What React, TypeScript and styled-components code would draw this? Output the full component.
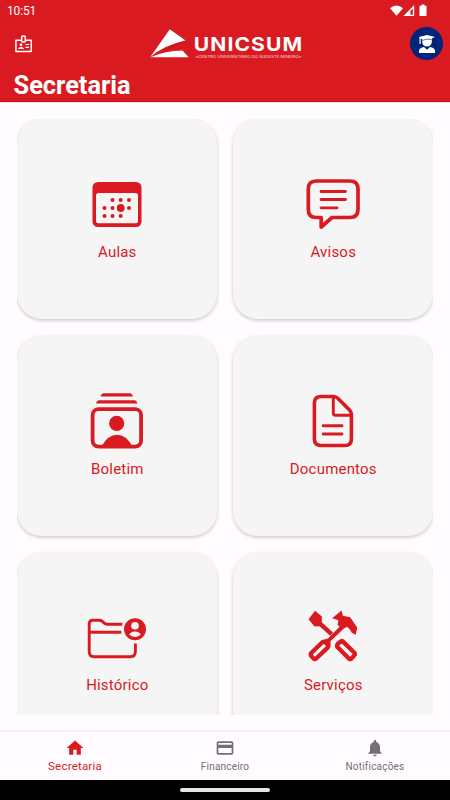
import React from "react";
import styled, { createGlobalStyle } from "styled-components";

const RED = "#d91a21";
const CARD = "#f5f5f5";

const Global = createGlobalStyle`
  * { box-sizing: border-box; }
  body { margin: 0; font-family: Roboto, "Liberation Sans", sans-serif; background: #fffbff; }
  svg { display: block; flex: none; }
`;

const Screen = styled.div`
  width: 450px;
  height: 800px;
  display: flex;
  flex-direction: column;
  overflow: hidden;
  background: #fffbff;
`;

const Header = styled.header`
  height: 102px;
  flex: none;
  background: ${RED};
  color: #fff;
  border-bottom: 1px solid #cf0d17;
  box-shadow: 0 1px 0 #f7e4e9;
`;

const StatusBar = styled.div`
  height: 22px;
  display: flex;
  justify-content: space-between;
  align-items: center;
  padding: 0 22px 0 7px;
  font-size: 12px;
  letter-spacing: -0.15px;
  line-height: 20px;
`;

const TopBar = styled.div`
  height: 44px;
  display: grid;
  grid-template-columns: 134px 154px 1fr;
  align-items: center;
  padding: 0 7px 0 15px;
`;

const Avatar = styled.div`
  justify-self: end;
  width: 33px;
  height: 33px;
  margin-top: -1px;
  border-radius: 50%;
  background: #03247b;
  display: grid;
  place-items: center;
`;

const Title = styled.h1`
  margin: 4px 0 0 13.5px;
  font-size: 25.4px;
  line-height: 30px;
  font-weight: 700;
`;

const Grid = styled.main`
  height: 596px;
  flex: none;
  margin: 17px 17px 0;
  padding-top: 0.4px;
  display: grid;
  grid-template-columns: 1fr 1fr;
  grid-auto-rows: 200px;
  gap: 16.6px 16px;
  overflow: hidden;
`;

const Card = styled.section`
  border-radius: 25px;
  background: ${CARD};
  box-shadow: 0 1px 4px rgba(0, 0, 0, 0.14), 0 2px 3px rgba(0, 0, 0, 0.08);
  color: ${RED};
  display: flex;
  flex-direction: column;
  align-items: center;
  padding-top: 52.6px;
`;

const CardLabel = styled.span`
  margin-top: 6px;
  padding-left: 0.6px;
  font-size: 15px;
  line-height: 20px;
  letter-spacing: 0.2px;
`;

const Nav = styled.nav`
  margin-top: 15px;
  height: 50px;
  flex: none;
  border-top: 2px solid #f8f2f6;
  display: grid;
  grid-template-columns: repeat(3, 1fr);
`;

const NavItem = styled.div<{ $active?: boolean }>`
  display: flex;
  flex-direction: column;
  align-items: center;
  padding-top: 5.5px;
  color: ${(p) => (p.$active ? RED : "#717073")};
  font-size: ${(p) => (p.$active ? 11.5 : 10)}px;
  letter-spacing: 0.2px;
  line-height: 14px;
`;

const NavLabel = styled.span<{ $active?: boolean }>`
  margin-top: ${(p) => (p.$active ? 1.5 : 2.5)}px;
`;

const SystemBar = styled.footer`
  height: 20px;
  flex: none;
  background: #000;
  display: grid;
  place-items: center;
`;

const HomeHandle = styled.div`
  width: 90px;
  height: 4px;
  border-radius: 2px;
  background: #e6e6e6;
`;

const StatusIcons = () => (
  <svg width="38" height="14" viewBox="0 0 38 14" fill="#fff">
    <path d="M0 4.200Q6.500-1 13 4.200L6.500 11.700Z" />
    <path fillRule="evenodd" d="M24.200 1V12H13.500ZM22.800 4.600L20.400 7V10.700H22.800Z" />
    <path d="M31.500 .500h3v1.200h2V11.500q0 .5-.5.5h-6q-.5 0-.5-.5V1.700h2Z" />
  </svg>
);

const BadgeIcon = () => (
  <svg width="18" height="19" viewBox="0 0 18 19" fill="none" stroke="#fff" strokeWidth="1.5">
    <path d="M6.200 5.200H.9V16.600H16.200V5.200H10.500" strokeLinejoin="round" />
    <rect x="6.700" y=".900" width="3.600" height="6.200" rx="1" />
    <path d="M10.500 9.500h3.500M10.500 12.300h3.500" strokeWidth="1.200" />
    <circle cx="6" cy="9.800" r="1.400" fill="#fff" stroke="none" />
    <path d="M3.200 14v-.7Q6 10.800 8.900 13.300V14Z" fill="#fff" stroke="none" />
  </svg>
);

const Logo = () => (
  <svg width="154" height="32" viewBox="0 0 154 32" fill="#fff">
    <path d="M20.800 1.200L36.500 12.600Q14 17.500 1.200 29.300Z" />
    <path d="M36.500 12.600Q20 17.500 11.500 25.500Q20 20.500 36.500 14Z" fill="#b9121a" opacity=".5" />
    <path d="M1.500 29.200Q16 23 33.500 22.600L39.700 29.200Z" />
    <text transform="translate(44.800 23) scale(1.14 1)" fontFamily="Inter, Roboto, sans-serif" fontSize="18.500" fontWeight="700" textLength="95" lengthAdjust="spacing">UNICSUM</text>
    <text x="46.500" y="30.300" fontFamily="Inter, Roboto, sans-serif" fontSize="4" textLength="106" lengthAdjust="spacingAndGlyphs" opacity=".8">«CENTRO UNIVERSITÁRIO DO SUDESTE MINEIRO»</text>
  </svg>
);

const GraduateIcon = () => (
  <svg width="18" height="20" viewBox="0 0 18 20" fill="#fff">
    <path d="M1 3L9 1L17 3L13.800 4.500V8.500Q13 12.500 9 12.500Q5 12.500 4.300 8.500V5.300L2.700 4.700V10H1.500V4Z" />
    <path d="M4.500 6.300Q9 4.300 13.500 5.500" stroke="#03247b" strokeWidth=".6" fill="none" />
    <path d="M1 19V16.500Q1.500 13.500 6 13L9 15.800L12 13Q16.500 13.500 17 16.500V19Z" />
  </svg>
);

const IconFrame = ({ children }: { children: React.ReactNode }) => (
  <svg width="64" height="64" viewBox="0 0 64 64" fill="none" stroke="currentColor" strokeLinecap="round" strokeLinejoin="round">
    {children}
  </svg>
);

const CalendarIcon = () => (
  <IconFrame>
    <g fill="currentColor" stroke="none">
      <rect x="7.500" y="10" width="49" height="45" rx="5.500" />
      <rect x="11" y="21" width="42" height="30.300" rx="2.500" fill={CARD} />
      {[[27.500, 28], [35.700, 28], [44, 28], [19.500, 36], [27.500, 36], [44, 36], [19.500, 44], [27.500, 44], [35.700, 44]].map(([x, y]) => (
        <circle key={`${x}-${y}`} cx={x} cy={y} r="2" />
      ))}
      <circle cx="35.700" cy="36" r="3.900" />
    </g>
  </IconFrame>
);

const MessageIcon = () => (
  <IconFrame>
    <path strokeWidth="3.700" d="M15 9H49Q57 9 57 17V37.500Q57 45.500 49 45.500H31L20.200 55V45.500H15Q7.300 45.500 7.300 37.500V17Q7.300 9 15 9Z" />
    <path strokeWidth="2.800" d="M20 19.500H44.500M20 27.500H44.500M20 35.800H36" />
  </IconFrame>
);

const PersonFrameIcon = () => (
  <IconFrame>
    <rect x="7.600" y="20.200" width="48.500" height="37.400" rx="6" strokeWidth="3.800" />
    <g fill="currentColor" stroke="none">
      <path d="M18 4.300H45.500Q47.500 5 48 7.500H15.500Q16 5 18 4.300ZM13.500 11.200H50Q52 12 52.500 14.500H11Q11.500 12 13.500 11.200Z" />
      <circle cx="31.700" cy="34.400" r="7.600" />
      <path d="M16.300 57.500Q23 45.700 32 45.700T47.700 57.500Z" />
    </g>
  </IconFrame>
);

const DocumentIcon = () => (
  <IconFrame>
    <path strokeWidth="3.600" d="M20 7.500H32.500Q35 7.500 37 9.500L48.500 21Q50.400 23 50.400 25V50Q50.400 56.500 44 56.500H20Q13.400 56.500 13.400 50V14Q13.400 7.500 20 7.500Z" />
    <path strokeWidth="2.900" d="M32.300 8V24Q32.300 26.300 34.500 26.300H50M22.200 36.700H41M22.200 45H41" />
  </IconFrame>
);

const FolderIcon = () => (
  <IconFrame>
    <path strokeWidth="2.900" strokeLinecap="butt" d="M37.300 19.200H22Q20.500 19.200 19.300 18.100L17.300 16.300Q16 15.200 14.300 15.200H8Q4.200 15.200 4.200 19V46.500Q4.200 51.800 9.500 51.800H45Q50.400 51.800 50.400 46.500V38.500M4.200 27.200H36.300" />
    <g stroke="none">
      <circle cx="50" cy="24.300" r="11" fill="currentColor" />
      <circle cx="50" cy="20.800" r="3.800" fill={CARD} />
      <path d="M44.200 29.600Q46 26.400 50 26.400T55.800 29.600Q53.500 32 50 32T44.200 29.600Z" fill={CARD} />
    </g>
  </IconFrame>
);

const ToolsIcon = () => (
  <IconFrame>
    <g transform="translate(-6.500 -5.200) scale(.33333)" fill="currentColor" stroke="none">
      <path d="M62 33L82 50V67L116 99L107 108L75 79L60 80L42 58Z" />
      <path d="M113 55L141 32L145 48L167 52L188 83L184 105L172 99L166 88L157 81L148 86L108 124V135L99 143L85 126L94 117H100L135 81L129 74L132 61Z" />
      <g fill="none" stroke="currentColor" strokeWidth="13" strokeLinejoin="round">
        <path d="M91 126L101 135Q103 140 98 145L65 176Q60 180 56 175L50 168Q47 163 51 159L82 129Q86 124 91 126Z" />
        <path d="M130 132L139 125Q143 122 147 127L179 158Q183 163 179 167L172 175Q168 180 163 176L131 144Q125 138 130 132Z" />
      </g>
    </g>
  </IconFrame>
);

const HomeIcon = () => (
  <svg width="20" height="20" viewBox="0 0 24 24" fill="currentColor"><path d="M10 20v-6h4v6h5v-8h3L12 3 2 12h3v8z" /></svg>
);
const PaymentIcon = () => (
  <svg width="20" height="20" viewBox="0 0 24 24" fill="currentColor"><path d="M20 4H4c-1.110 0-1.990.89-1.990 2L2 18c0 1.110.89 2 2 2h16c1.110 0 2-.89 2-2V6c0-1.110-.89-2-2-2zm0 14H4v-6h16v6zm0-10H4V6h16v2z" /></svg>
);
const BellIcon = () => (
  <svg width="20" height="20" viewBox="0 0 24 24" fill="currentColor"><path d="M12 22c1.100 0 2-.9 2-2h-4c0 1.100.89 2 2 2zm6-6v-5c0-3.070-1.640-5.640-4.500-6.320V4c0-.83-.67-1.500-1.500-1.500s-1.500.67-1.500 1.500v.68C7.630 5.360 6 7.920 6 11v5l-2 2v1h16v-1l-2-2z" /></svg>
);

const tiles = [
  { label: "Aulas", Icon: CalendarIcon },
  { label: "Avisos", Icon: MessageIcon },
  { label: "Boletim", Icon: PersonFrameIcon },
  { label: "Documentos", Icon: DocumentIcon },
  { label: "Histórico", Icon: FolderIcon },
  { label: "Serviços", Icon: ToolsIcon },
];

const tabs = [
  { label: "Secretaria", Icon: HomeIcon, active: true },
  { label: "Financeiro", Icon: PaymentIcon, active: false },
  { label: "Notificações", Icon: BellIcon, active: false },
];

export default function App() {
  return (
    <Screen>
      <Global />
      <Header>
        <StatusBar>
          <span>10:51</span>
          <StatusIcons />
        </StatusBar>
        <TopBar>
          <BadgeIcon />
          <Logo />
          <Avatar><GraduateIcon /></Avatar>
        </TopBar>
        <Title>Secretaria</Title>
      </Header>
      <Grid>
        {tiles.map(({ label, Icon }) => (
          <Card key={label}>
            <Icon />
            <CardLabel>{label}</CardLabel>
          </Card>
        ))}
      </Grid>
      <Nav>
        {tabs.map(({ label, Icon, active }) => (
          <NavItem key={label} $active={active}>
            <Icon />
            <NavLabel $active={active}>{label}</NavLabel>
          </NavItem>
        ))}
      </Nav>
      <SystemBar><HomeHandle /></SystemBar>
    </Screen>
  );
}
